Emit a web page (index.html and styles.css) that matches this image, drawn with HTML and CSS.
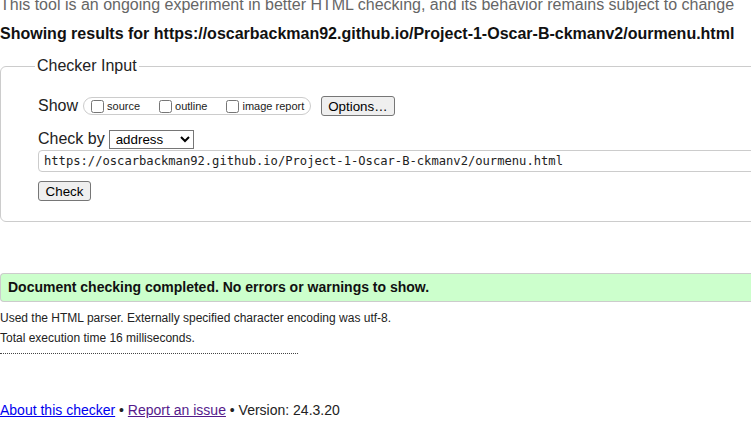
FILE: index.html
```html
<!DOCTYPE html>
<html lang="en">
<head>
<meta charset="utf-8">
<title>Showing results for https://oscarbackman92.github.io/Project-1-Oscar-B-ckmanv2/ourmenu.html - Nu Html Checker</title>
<link rel="stylesheet" href="styles.css">
</head>
<body>
<p class="tagline">This tool is an ongoing experiment in better HTML checking, and its behavior remains subject to change</p>
<h2 class="results">Showing results for https://oscarbackman92.github.io/Project-1-Oscar-B-ckmanv2/ourmenu.html</h2>
<form class="checker">
  <fieldset class="checker-box">
    <legend class="checker-legend">Checker Input</legend>
    <div class="row show-row">
      <span class="row-label">Show</span>
      <span class="opt-group">
        <label class="opt"><input type="checkbox" class="cb"><span>source</span></label>
        <label class="opt"><input type="checkbox" class="cb"><span>outline</span></label>
        <label class="opt"><input type="checkbox" class="cb"><span>image report</span></label>
      </span>
      <button type="button" class="btn btn-options">Options…</button>
    </div>
    <div class="row by-row">
      <label class="row-label">Check by</label>
      <select class="by-select"><option>address</option><option>file upload</option><option>text input</option></select>
    </div>
    <input class="url" type="url" value="https://oscarbackman92.github.io/Project-1-Oscar-B-ckmanv2/ourmenu.html">
    <button type="button" class="btn btn-check">Check</button>
  </fieldset>
</form>
<p class="success">Document checking completed. No errors or warnings to show.</p>
<p class="details">Used the HTML parser. Externally specified character encoding was utf-8.</p>
<p class="details">Total execution time 16 milliseconds.</p>
<hr class="rule">
<p class="footer"><a href="#about" class="link">About this checker</a> • <a href="#issue" class="link visited">Report an issue</a> • Version: 24.3.20</p>
</body>
</html>
```

FILE: styles.css
```css
html {
  overflow: hidden;
  background: #fff;
}
body {
  margin: 0;
  width: 1000px;
  font-family: "Liberation Sans", Arial, sans-serif;
  color: #222;
}
.tagline {
  margin: -4px 0 0;
  font-size: 16px;
  color: #666;
  white-space: nowrap;
}
.results {
  margin: 11px 0 0;
  font-size: 16px;
  font-weight: bold;
  color: #111;
  white-space: nowrap;
}
.checker {
  margin: 0;
}
.checker-box {
  margin: 14px 0 0;
  padding: 0 0 20px 37px;
  border: 1px solid #ccc;
  border-radius: 6px;
  min-width: 0;
}
.checker-legend {
  margin-left: -3px;
  padding: 0 2px;
  font-size: 16px;
}
.row {
  display: flex;
  align-items: center;
  font-size: 16px;
}
.show-row {
  margin-top: 21px;
  height: 20px;
}
.row-label {
  margin-right: 5px;
}
.opt-group {
  display: inline-flex;
  align-items: center;
  height: 16px;
  padding: 0 6px 0 7px;
  border: 1px solid #ccc;
  border-radius: 9px;
}
.opt {
  display: inline-flex;
  align-items: center;
  font-size: 11px;
  margin-right: 19px;
}
.opt:last-child {
  margin-right: 0;
}
.cb {
  width: 13px;
  height: 13px;
  margin: 0 3px 0 0;
}
.btn {
  font-family: "Liberation Sans", Arial, sans-serif;
  font-size: 13.33px;
  color: #000;
  background: #efefef;
  border: 1px solid #767676;
  border-radius: 3px;
  height: 20px;
  padding: 0 6px;
}
.btn-options {
  margin-left: 10px;
}
.by-row {
  margin-top: 14px;
  height: 18px;
}
.by-select {
  width: 85px;
  height: 19px;
  margin-left: -1px;
  font-family: "Liberation Sans", Arial, sans-serif;
  font-size: 13.33px;
  color: #000;
  background: #fff;
  border: 1px solid #767676;
  border-radius: 0;
  padding: 0 0 0 2px;
}
.url {
  display: block;
  box-sizing: border-box;
  width: 900px;
  height: 22px;
  margin: 2px 0 0;
  padding: 0 5px;
  border: 1px solid #ccc;
  border-radius: 4px;
  font-family: "DejaVu Sans Mono", "Liberation Mono", monospace;
  font-size: 12.15px;
  color: #222;
}
.btn-check {
  display: block;
  margin-top: 9px;
  width: 53px;
  padding: 0;
}
.success {
  margin: 51px 0 0;
  padding: 5px 7px 6px;
  font-size: 14px;
  font-weight: bold;
  color: #111;
  background: #ccffcc;
  border-top: 1px solid #ccc;
  border-bottom: 1px solid #ccc;
  border-left: 1px solid #ccc;
  border-radius: 4px 0 0 4px;
}
.details {
  margin: 0;
  font-size: 12px;
  line-height: 20px;
}
.success + .details {
  margin-top: 6px;
}
.rule {
  width: 298px;
  margin: 5px 0 0 0;
  border: 0;
  border-top: 1px dotted #444;
  height: 0;
}
.footer {
  margin: 48px 0 0;
  font-size: 14px;
}
.link {
  color: #0000ee;
}
.link.visited {
  color: #551a8b;
}
```
